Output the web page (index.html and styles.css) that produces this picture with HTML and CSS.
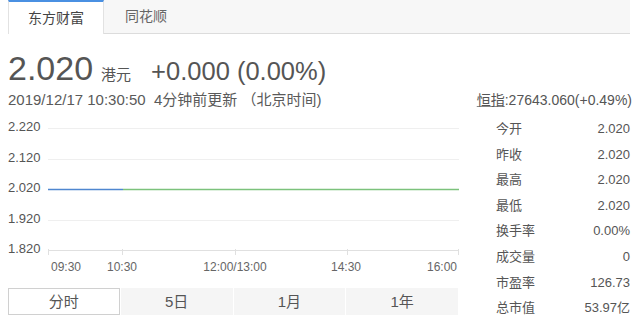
FILE: index.html
```html
<!DOCTYPE html>
<html lang="zh-CN">
  <head>
    <meta charset="UTF-8" />
    <meta name="viewport" content="width=device-width, initial-scale=1.0" />
    <title>港股行情</title>
    <link rel="stylesheet" href="styles.css">
  </head>
  <body>
    <div class="whole">
      <div class="source">
        <div class="src active">东方财富</div>
        <div class="src">同花顺</div>
      </div>

      <div class="price">
        <span class="now">2.020</span>
        <span class="unit">港元</span>
        <span class="chg">+0.000 (0.00%)</span>
      </div>

      <div class="info">
        <div class="time">2019/12/17 10:30:50&nbsp;&nbsp;4分钟前更新 （北京时间)</div>
        <div class="hsi"><u>恒指</u>:27643.060(+0.49%)</div>
      </div>

      <div class="main">
        <div class="left">
          <svg class="chart" width="452" height="170" viewBox="0 0 452 170">
            <g class="grid">
              <line x1="40" y1="14.5" x2="451" y2="14.5" />
              <line x1="40" y1="45.5" x2="451" y2="45.5" />
              <line x1="40" y1="106.5" x2="451" y2="106.5" />
            </g>
            <g class="axis">
              <line x1="40" y1="136.5" x2="451" y2="136.5" />
              <line x1="40.5" y1="135" x2="40.5" y2="141" />
              <line x1="114.5" y1="135" x2="114.5" y2="141" />
              <line x1="227.5" y1="135" x2="227.5" y2="141" />
              <line x1="339.5" y1="135" x2="339.5" y2="141" />
              <line x1="450.5" y1="135" x2="450.5" y2="141" />
            </g>
            <line class="avg" x1="115" y1="75.5" x2="451" y2="75.5" />
            <line class="cur" x1="40" y1="75.5" x2="115" y2="75.5" />
            <g class="ylab">
              <text x="0" y="17">2.220</text>
              <text x="0" y="48">2.120</text>
              <text x="0" y="78">2.020</text>
              <text x="0" y="109">1.920</text>
              <text x="0" y="139">1.820</text>
            </g>
            <g class="xlab">
              <text x="43" y="157">09:30</text>
              <text x="114" y="157" text-anchor="middle">10:30</text>
              <text x="227" y="157" text-anchor="middle">12:00/13:00</text>
              <text x="338" y="157" text-anchor="middle">14:30</text>
              <text x="449" y="157" text-anchor="end">16:00</text>
            </g>
          </svg>
          <div class="period">
            <div class="btn on">分时</div>
            <div class="btn">5日</div>
            <div class="btn">1月</div>
            <div class="btn">1年</div>
          </div>
        </div>

        <div class="right">
          <div class="row"><span>今开</span><span>2.020</span></div>
          <div class="row"><span>昨收</span><span>2.020</span></div>
          <div class="row"><span>最高</span><span>2.020</span></div>
          <div class="row"><span>最低</span><span>2.020</span></div>
          <div class="row"><span>换手率</span><span>0.00%</span></div>
          <div class="row"><span>成交量</span><span>0</span></div>
          <div class="row"><span>市盈率</span><span>126.73</span></div>
          <div class="row"><span>总市值</span><span>53.97亿</span></div>
        </div>
      </div>
    </div>
  </body>
</html>
```

FILE: styles.css
```css
body {
  margin: 0;
  background-color: white;
  font-family: "Liberation Sans", "Noto Sans CJK SC", sans-serif;
  color: #555;
}
.whole {
  padding: 0 8px;
  width: 624px;
}
.source {
  display: flex;
  height: 33px;
  background-color: #f7f7f7;
  border-bottom: 1px solid #dcdcdc;
  width: 622px;
}
.src {
  padding: 0 21px;
  line-height: 33px;
  font-size: 14px;
  color: #666;
}
.active {
  background-color: white;
  border-top: 2px solid #4a90e2;
  border-left: 1px solid #e2e2e2;
  border-right: 1px solid #e2e2e2;
  line-height: 32px;
  margin-bottom: -1px;
  padding: 0 19px;
  color: #444;
}
.price {
  display: flex;
  align-items: baseline;
  margin-top: 14px;
  height: 40px;
}
.now {
  font-size: 34px;
  line-height: 40px;
}
.unit {
  font-size: 15px;
  margin-left: 8px;
}
.chg {
  font-size: 25.5px;
  margin-left: 20px;
}
.info {
  display: flex;
  justify-content: space-between;
  align-items: baseline;
  height: 22px;
  line-height: 20px;
}
.time {
  font-size: 15px;
  color: #5a5a5a;
}
.hsi {
  font-size: 14px;
  padding-top: 2px;
}
.hsi u {
  text-decoration-color: #888;
}
.main {
  display: flex;
  margin-top: 4px;
}
.left {
  width: 452px;
}
.chart {
  display: block;
}
.grid line {
  stroke: #efefef;
  stroke-width: 1;
}
.axis line {
  stroke: #e0e0e0;
  stroke-width: 1;
}
.cur {
  stroke: #4f87d0;
  stroke-width: 1.5;
}
.avg {
  stroke: #7cc27c;
  stroke-width: 1.5;
}
.ylab text {
  font-size: 13px;
  fill: #555;
  font-family: "Liberation Sans", sans-serif;
}
.xlab text {
  font-size: 12px;
  fill: #666;
  font-family: "Liberation Sans", sans-serif;
}
.period {
  display: grid;
  grid-template-columns: repeat(4, 1fr);
  gap: 1px;
  width: 450px;
  margin-top: 4px;
}
.btn {
  height: 27px;
  line-height: 27px;
  text-align: center;
  font-size: 15px;
  background-color: #f5f5f5;
  color: #555;
}
.on {
  background-color: white;
  border: 1px solid #d0d0d0;
  height: 25px;
  line-height: 25px;
}
.right {
  width: 134px;
  margin-left: 36px;
  padding-top: 2px;
}
.row {
  display: flex;
  justify-content: space-between;
  height: 25.6px;
  line-height: 25.6px;
  font-size: 13px;
  color: #555;
}
```
